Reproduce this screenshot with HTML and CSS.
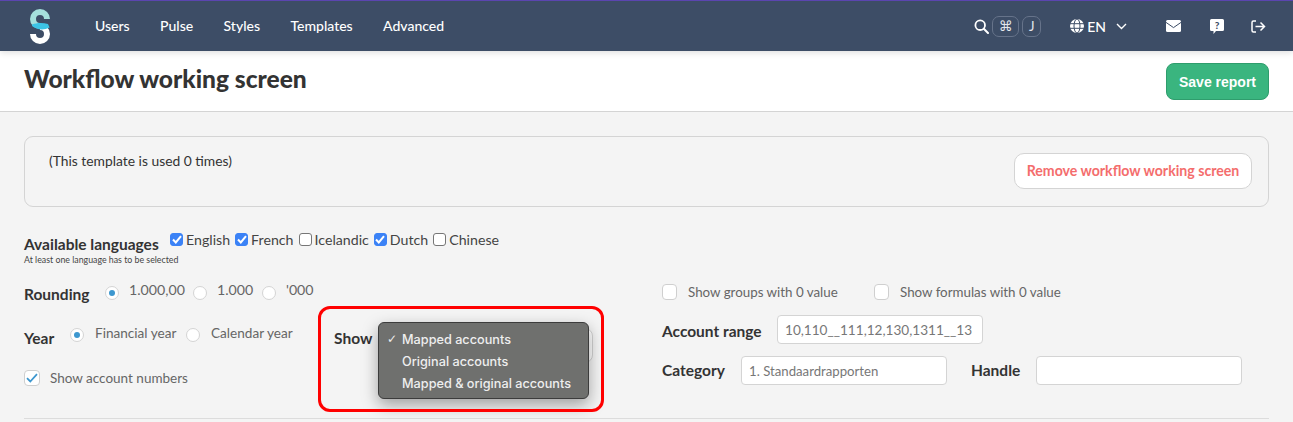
FILE: index.html
```html
<!DOCTYPE html>
<html lang="en">
<head>
<meta charset="utf-8">
<title>Workflow working screen</title>
<link rel="stylesheet" href="styles.css">
</head>
<body>
<header class="topbar">
  <svg class="logo" width="24" height="38" viewBox="0 0 24 38">
    <path d="M19 12A7 7 0 1 0 12 19" fill="none" stroke="#a5e0dc" stroke-width="6"/>
    <path d="M12 20A7 7 0 1 1 5 27" fill="none" stroke="#fff" stroke-width="6"/>
    <path d="M4 17.500C9 15.500 15 15.500 20 17L21.500 20.500C16 23.500 9 23 4 19Z" fill="#3cc4e6"/>
  </svg>
  <nav class="nav">
    <a>Users</a><a>Pulse</a><a>Styles</a><a>Templates</a><a>Advanced</a>
  </nav>
  <div class="tools">
    <svg class="ic-search" width="15" height="15" viewBox="0 0 15 15"><circle cx="6.200" cy="6.200" r="4.800" fill="none" stroke="#fff" stroke-width="1.800"/><path d="M9.800 9.800L14 14" stroke="#fff" stroke-width="2" stroke-linecap="round"/></svg>
    <span class="kbd kbd-cmd">⌘</span>
    <span class="kbd kbd-j">J</span>
    <svg class="ic-globe" width="14" height="14" viewBox="0 0 14 14"><circle cx="7" cy="7" r="7" fill="#fff"/><g fill="none" stroke="#3d4d66" stroke-width="1"><ellipse cx="7" cy="7" rx="3" ry="7"/><path d="M0 4.700H14M0 9.300H14"/></g></svg>
    <span class="lang">EN</span>
    <svg class="ic-chev" width="11" height="7" viewBox="0 0 11 7"><path d="M1 1L5.500 5.500L10 1" fill="none" stroke="#fff" stroke-width="1.400"/></svg>
    <svg class="ic-mail" width="15" height="12" viewBox="0 0 15 12"><rect width="15" height="12" rx="1.500" fill="#fff"/><path d="M0 2.400L7.500 7.600L15 2.400" fill="none" stroke="#3d4d66" stroke-width="1"/></svg>
    <span class="ic-help">
      <svg width="14" height="15" viewBox="0 0 14 15"><path d="M1.500 0H12.500A1.500 1.500 0 0 1 14 1.500V10.500A1.500 1.500 0 0 1 12.500 12H6L3.500 15V12H1.500A1.500 1.500 0 0 1 0 10.500V1.500A1.500 1.500 0 0 1 1.500 0Z" fill="#fff"/><text x="7" y="9.600" text-anchor="middle" class="help-q">?</text></svg>
    </span>
    <svg class="ic-out" width="15" height="13" viewBox="0 0 15 13"><path d="M5 1H2.500A1.500 1.500 0 0 0 1 2.500V10.500A1.500 1.500 0 0 0 2.500 12H5" fill="none" stroke="#fff" stroke-width="1.500"/><path d="M4.500 6.500H13.500M9.500 2.500L13.500 6.500L9.500 10.500" fill="none" stroke="#fff" stroke-width="1.500"/></svg>
  </div>
</header>

<section class="pagehead">
  <h1>Workflow working screen</h1>
  <button class="btn-save">Save report</button>
</section>

<main class="content">
  <div class="card">
    <p>(This template is used 0 times)</p>
    <button class="btn-remove">Remove workflow working screen</button>
  </div>

  <div class="langs">
    <div class="langs-title">
      <strong class="lbl">Available languages</strong>
      <small>At least one language has to be selected</small>
    </div>
    <div class="langs-list">
      <span class="lang-item"><i class="mac on"><svg width="10" height="9" viewBox="0 0 10 9"><path d="M1 4.500L3.800 7.500L9 1.200" fill="none" stroke="#fff" stroke-width="2"/></svg></i>English</span>
      <span class="lang-item"><i class="mac on"><svg width="10" height="9" viewBox="0 0 10 9"><path d="M1 4.500L3.800 7.500L9 1.200" fill="none" stroke="#fff" stroke-width="2"/></svg></i>French</span>
      <span class="lang-item"><i class="mac"></i>Icelandic</span>
      <span class="lang-item"><i class="mac on"><svg width="10" height="9" viewBox="0 0 10 9"><path d="M1 4.500L3.800 7.500L9 1.200" fill="none" stroke="#fff" stroke-width="2"/></svg></i>Dutch</span>
      <span class="lang-item"><i class="mac"></i>Chinese</span>
    </div>
  </div>

  <div class="cols">
    <div class="col-left">
      <div class="row-rounding">
        <strong class="lbl lbl-round">Rounding</strong>
        <span class="radio on"></span><span class="opt opt-a">1.000,00</span>
        <span class="radio"></span><span class="opt opt-b">1.000</span>
        <span class="radio"></span><span class="opt">'000</span>
      </div>
      <div class="row-year">
        <strong class="lbl lbl-year">Year</strong>
        <span class="radio on"></span><span class="opt opt-c">Financial year</span>
        <span class="radio"></span><span class="opt opt-d">Calendar year</span>
        <div class="show">
          <strong class="lbl">Show</strong>
          <div class="select"></div>
          <ul class="menu">
            <li class="sel">Mapped accounts</li>
            <li>Original accounts</li>
            <li>Mapped &amp; original accounts</li>
          </ul>
          <div class="annot"></div>
        </div>
      </div>
      <div class="row-num">
        <i class="box"><svg width="12" height="10" viewBox="0 0 12 10"><path d="M1 5.200L4.300 8.500L11 1.200" fill="none" stroke="#3d97cf" stroke-width="1.800"/></svg></i>
        <span class="opt">Show account numbers</span>
      </div>
    </div>
    <div class="col-right">
      <div class="row-checks">
        <i class="box"></i><span class="opt opt-g">Show groups with 0 value</span>
        <i class="box"></i><span class="opt">Show formulas with 0 value</span>
      </div>
      <div class="row-range">
        <strong class="lbl">Account range</strong>
        <input class="field field-range" value="10,110__111,12,130,1311__13">
      </div>
      <div class="row-cat">
        <strong class="lbl">Category</strong>
        <input class="field field-cat" value="1. Standaardrapporten">
        <strong class="lbl lbl-handle">Handle</strong>
        <input class="field" value="">
      </div>
    </div>
  </div>
  <hr class="rule">
</main>
</body>
</html>
```
FILE: styles.css
```css
* { box-sizing: border-box; }
html, body { margin: 0; height: 100%; overflow: hidden; }
body { background: #f4f4f4; font-family: Lato, "Liberation Sans", sans-serif; color: #333; }

.topbar {
  height: 51px;
  background: #3d4d66;
  border-top: 1px solid #5b45b0;
  display: flex;
  align-items: center;
  padding-left: 28px;
  color: #fff;
  position: relative;
  z-index: 2;
  box-shadow: 0 2px 6px rgba(0,0,0,.12);
}
.logo { margin-right: 43px; }
.nav { display: flex; gap: 30.4px; font-size: 14px; font-weight: 500; margin-bottom: 2px; }
.tools { margin-left: auto; display: flex; align-items: center; padding-right: 27px; }
.ic-search { margin-right: 3px; }
.kbd {
  height: 21px;
  border: 1px solid #66738a;
  border-radius: 7px;
  display: flex; align-items: center; justify-content: center;
  color: #e4e7ec;
}
.kbd-cmd { width: 27px; margin-right: 3px; font: 14px "DejaVu Sans", sans-serif; }
.kbd-j { width: 19px; margin-right: 29px; font-size: 13px; }
.lang { font-size: 14px; font-weight: 500; margin: 0 10px 0 3px; }
.ic-chev { margin-right: 39px; }
.ic-mail { margin-right: 29px; }
.ic-help { display: flex; margin-right: 27px; }
.help-q { font: 900 10px Lato, sans-serif; fill: #3d4d66; }

.pagehead {
  height: 61px;
  background: #fff;
  border-bottom: 1px solid #d4d4d4;
  display: flex;
  align-items: center;
  justify-content: space-between;
  padding: 0 24px;
}
.pagehead h1 { margin: 0 0 4px; font-size: 24.55px; font-weight: 900; color: #333; line-height: 1; }
.btn-save {
  width: 103px; height: 37px;
  margin-top: 1px;
  background: #3ab57f;
  border: 1px solid #2f9d6d;
  border-radius: 8px;
  color: #fff;
  font: bold 14px "Liberation Sans", sans-serif;
  padding: 0;
}

.content { padding: 24px 24px 0; }
.card {
  height: 71px;
  border: 1px solid #d4d4d4;
  border-radius: 9px;
  display: flex;
  justify-content: space-between;
  padding: 16px 16px 0 24px;
}
.card p { margin: -1px 0 0; font-size: 13.85px; line-height: 17px; color: #333; }
.btn-remove {
  width: 238px; height: 36px;
  background: #fff;
  border: 1px solid #d4d4d4;
  border-radius: 10px;
  color: #f46d6d;
  font: 700 14.15px Lato, sans-serif;
  padding: 0 0 2px;
}

.lbl { font-size: 15.5px; font-weight: 700; color: #333; line-height: 18px; }

.langs { display: flex; margin-top: 26px; height: 33px; }
.langs-title { width: 146px; padding-top: 2px; display: flex; flex-direction: column; }
.langs-title small { font-size: 8.8px; line-height: 11px; margin-top: 1px; color: #444; white-space: nowrap; }
.langs-list { display: flex; font-size: 14.2px; line-height: 17px; color: #444; margin-top: -2px; }
.lang-item { display: flex; align-items: center; height: 17px; margin-right: 5px; }
.mac {
  width: 13px; height: 13px;
  margin-right: 3px;
  background: #fff;
  border: 1px solid #767676;
  border-radius: 3px;
  display: flex; align-items: center; justify-content: center;
}
.mac.on { background: #3b82f6; border-color: #3b82f6; }

.cols { display: flex; margin-top: 15px; }
.col-left { width: 638px; flex: none; }
.col-right { flex: 1; }

.opt { font-size: 14px; color: #666; line-height: 17px; white-space: nowrap; }
.radio {
  width: 14px; height: 14px;
  flex: none;
  background: #fff;
  border: 1px solid #d4d4d4;
  border-radius: 50%;
  display: flex; align-items: center; justify-content: center;
}
.radio.on::after { content: ""; width: 6px; height: 6px; border-radius: 50%; background: #3d97cf; }

.row-rounding { display: flex; align-items: center; height: 22px; }
.row-rounding .radio { margin-top: 2px; margin-right: 10px; }
.row-rounding .opt { margin-top: -5px; font-size: 14.2px; }
.row-rounding .lbl { margin-top: 3px; }
.lbl-round { width: 81px; }
.opt-a { width: 64px; }
.opt-b { width: 44px; margin-right: 1px; }

.row-year { display: flex; align-items: center; height: 22px; margin-top: 22px; }
.row-year .radio { margin-top: -2px; margin-right: 11px; }
.row-year .opt { margin-top: -6px; font-size: 13.6px; }
.row-year .lbl { margin-top: 3px; }
.lbl-year { width: 46px; }
.opt-c { width: 91px; }
.opt-d { width: 123px; }

.show { position: relative; display: flex; align-items: center; }
.select {
  position: absolute; left: 46px; top: 2px;
  width: 213px; height: 35px;
  background: #fff;
  border: 1px solid #d4d4d4;
  border-radius: 8px;
}
.menu {
  position: absolute; left: 44px; top: -4px;
  width: 211px; height: 77px;
  margin: 0; padding: 6px 0 0;
  list-style: none;
  background: #6f706e;
  border: 1px solid #3c3c3c;
  border-radius: 6px;
  box-shadow: 0 6px 16px rgba(0,0,0,.35);
  font: 500 12.7px Inter, "Liberation Sans", sans-serif;
  color: #eee;
}
.menu li { height: 22px; line-height: 21px; padding-left: 23px; position: relative; white-space: nowrap; }
.menu li.sel::before { content: "✓"; position: absolute; left: 8px; font-size: 12px; font-family: "DejaVu Sans", sans-serif; }
.annot {
  position: absolute; left: -16px; top: -20px;
  width: 286px; height: 106px;
  border: 3px solid #f00;
  border-radius: 12px;
}

.box {
  width: 15px; height: 16px;
  flex: none;
  background: #fff;
  border: 1px solid #cfcfcf;
  border-radius: 4px;
  display: flex; align-items: center; justify-content: center;
}
.row-num { display: flex; align-items: center; height: 18px; margin-top: 22px; }
.row-num .box { width: 16px; margin-right: 10px; }
.row-num .opt { font-size: 13.5px; }

.row-checks { display: flex; align-items: center; height: 22px; }
.row-checks .box { margin-right: 11px; }
.row-checks .opt { font-size: 13.35px; }
.opt-g { width: 186px; }

.field {
  height: 29px;
  width: 206px;
  background: #fff;
  border: 1px solid #d4d4d4;
  border-radius: 4px;
  padding: 0 7px;
  font: 14px Lato, sans-serif;
  color: #777;
}
.field-range { font-size: 13.6px; }
.field-cat { font-size: 13.2px; }
.row-range { display: flex; align-items: center; margin-top: 12px; }
.row-range .lbl { width: 115px; margin-top: 2px; }
.row-cat { display: flex; align-items: center; margin-top: 12px; }
.row-cat .lbl { width: 79px; margin-bottom: 2px; }
.row-cat .lbl-handle { width: 65px; margin-left: 24px; }

.rule { border: 0; border-top: 1px solid #dcdcdc; margin: 31px 0 0; }
```
